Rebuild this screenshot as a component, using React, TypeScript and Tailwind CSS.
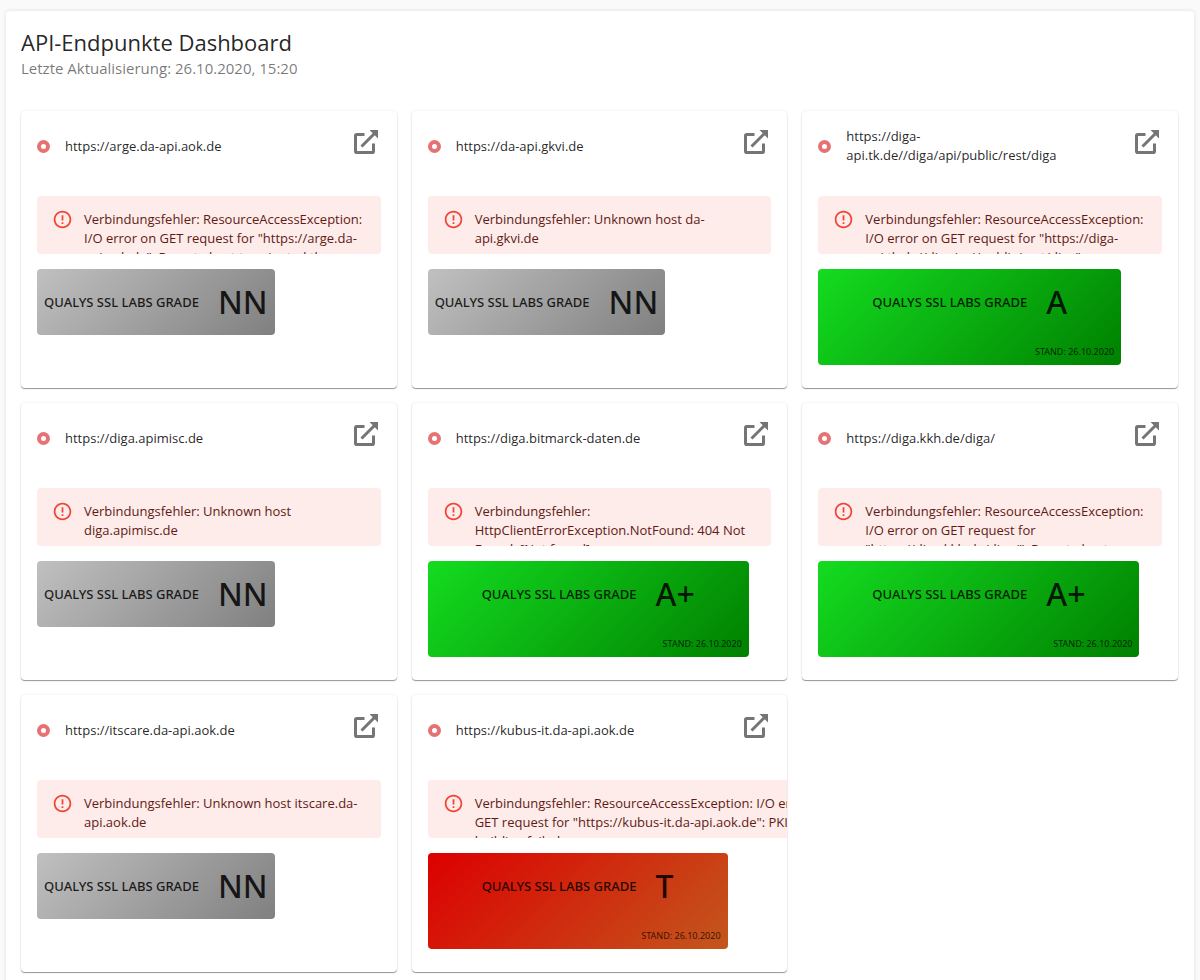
import React from 'react';
import { MdErrorOutline } from 'react-icons/md';

interface Endpoint {
  url: string;
  error: string;
  grade: string;
  date?: string;
  wide?: boolean;
}

const endpoints: Endpoint[] = [
  {
    url: 'https://arge.da-api.aok.de',
    error: 'ResourceAccessException: I/O error on GET request for "https://arge.da-api.aok.de": Remote host terminated the handshake',
    grade: 'NN',
  },
  { url: 'https://da-api.gkvi.de', error: 'Unknown host da-api.gkvi.de', grade: 'NN' },
  {
    url: 'https://diga-api.tk.de//diga/api/public/rest/diga',
    error: 'ResourceAccessException: I/O error on GET request for "https://diga-api.tk.de//diga/api/public/rest/diga"',
    grade: 'A',
    date: '26.10.2020',
  },
  { url: 'https://diga.apimisc.de', error: 'Unknown host diga.apimisc.de', grade: 'NN' },
  {
    url: 'https://diga.bitmarck-daten.de',
    error: 'HttpClientErrorException.NotFound: 404 Not Found: [Not found]',
    grade: 'A+',
    date: '26.10.2020',
  },
  {
    url: 'https://diga.kkh.de/diga/',
    error: 'ResourceAccessException: I/O error on GET request for "https://diga.kkh.de/diga/": Remote host',
    grade: 'A+',
    date: '26.10.2020',
  },
  { url: 'https://itscare.da-api.aok.de', error: 'Unknown host itscare.da-api.aok.de', grade: 'NN' },
  {
    url: 'https://kubus-it.da-api.aok.de',
    error: 'ResourceAccessException: I/O error on GET request for "https://kubus-it.da-api.aok.de": PKIX path building failed',
    grade: 'T',
    date: '26.10.2020',
    wide: true,
  },
];

const gradeColors: Record<string, string> = {
  NN: 'bg-[linear-gradient(135deg,#c0c0c0,#808080)]',
  A: 'bg-[linear-gradient(135deg,#14dc20,#008000)]',
  'A+': 'bg-[linear-gradient(135deg,#14dc20,#008000)]',
  T: 'bg-[linear-gradient(135deg,#dc0000,#c3571d)]',
};

function OpenIcon() {
  return (
    <svg viewBox="0 0 24 24" className="h-6 w-6" fill="none" stroke="currentColor" strokeWidth="3" aria-hidden="true">
      <path d="M10.500 4.500H2.800a1.300 1.300 0 0 0-1.300 1.300v15.400a1.300 1.300 0 0 0 1.300 1.300h15.400a1.300 1.300 0 0 0 1.300-1.300v-7.700" />
      <path d="M7.500 16.500 20.500 3.500" />
      <path d="M15.500 0H24v8.500z" fill="currentColor" stroke="none" />
    </svg>
  );
}

function GradeButton({ grade, date }: { grade: string; date?: string }) {
  return (
    <button
      type="button"
      className={`flex flex-col rounded-[4px] px-[7px] py-2 font-['Noto_Sans','Open_Sans',sans-serif] font-medium uppercase text-black/85 ${gradeColors[grade]}`}
    >
      <span className={`flex items-center gap-[19px] ${date ? 'px-[47px]' : ''}`}>
        <span className="text-[13px] leading-6">Qualys SSL Labs Grade</span>
        <span className="text-[32px] leading-[50px]">{grade}</span>
      </span>
      {date && (
        <span className="mt-5 self-end text-[9px] leading-[10px] font-normal text-black/75">Stand: {date}</span>
      )}
    </button>
  );
}

function EndpointCard({ url, error, grade, date, wide }: Endpoint) {
  return (
    <article className="flex h-[277px] flex-col overflow-hidden rounded-[4px] bg-white p-4 shadow-[0_1px_1px_rgba(0,0,0,0.4),0_0_3px_rgba(0,0,0,0.08)]">
      <header className="flex h-[38px] items-center">
        <span className="h-[13px] w-[13px] shrink-0 rounded-full border-4 border-[#e57373]" />
        <h2 className="ml-[15px] w-[240px] text-[13px] leading-[19px]">{url}</h2>
        <a href={url} aria-label={`${url} öffnen`} className="mr-[3px] mb-2 ml-auto text-[#757575]">
          <OpenIcon />
        </a>
      </header>
      <div
        role="alert"
        className={`mt-[31px] flex h-[58px] shrink-0 overflow-hidden rounded-[4px] bg-[#fdecea] px-[15px] py-[13px] text-[#611a15] ${wide ? 'w-[419px]' : ''}`}
      >
        <MdErrorOutline size={21} className="shrink-0 text-[#f44336]" />
        <p className="ml-[11px] pt-px text-[13px] leading-[19px]">Verbindungsfehler: {error}</p>
      </div>
      <div className="mt-[15px] flex">
        <GradeButton grade={grade} date={date} />
      </div>
    </article>
  );
}

export default function App() {
  return (
    <div className="min-h-screen bg-[#fafafa] px-[6px] pt-[11px] font-['Open_Sans','Noto_Sans',sans-serif] text-black/87">
      <main className="min-h-[1000px] rounded-[4px] bg-white py-[15px] pr-4 pl-[15px] shadow-[0_0_4px_rgba(0,0,0,0.12)]">
        <h1 className="text-[22px] leading-8">API-Endpunkte Dashboard</h1>
        <p className="text-[15px] leading-5 text-black/54">Letzte Aktualisierung: 26.10.2020, 15:20</p>
        <div className="mt-[33px] grid grid-cols-1 gap-[15px] sm:grid-cols-2 lg:grid-cols-3">
          {endpoints.map((endpoint) => (
            <EndpointCard key={endpoint.url} {...endpoint} />
          ))}
        </div>
      </main>
    </div>
  );
}
